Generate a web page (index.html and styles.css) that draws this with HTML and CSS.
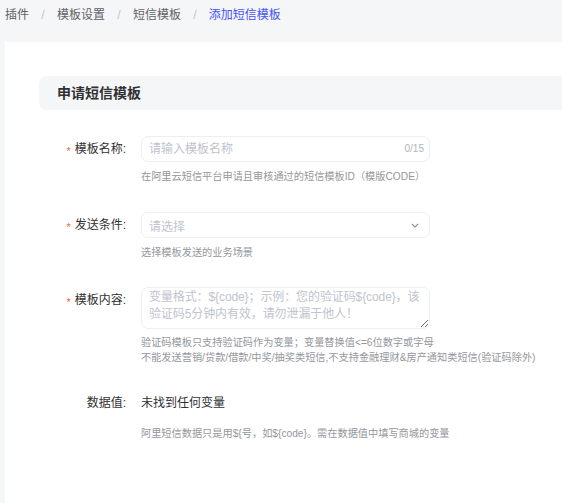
FILE: index.html
```html
<!DOCTYPE html>
<html lang="zh-CN">
<head>
<meta charset="utf-8">
<title>添加短信模板</title>
<link rel="stylesheet" href="styles.css">
</head>
<body>
<div class="page">
  <nav class="crumbs"><span class="crumb">插件</span><span class="sep">/</span><span class="crumb">模板设置</span><span class="sep">/</span><span class="crumb">短信模板</span><span class="sep">/</span><span class="crumb active">添加短信模板</span></nav>
  <main class="card">
    <div class="section-head">申请短信模板</div>
    <form class="form">
      <div class="item item-name">
        <label class="label"><span class="req">*</span>模板名称:</label>
        <div class="content">
          <div class="input-wrap">
            <input class="input" type="text" placeholder="请输入模板名称">
            <span class="count">0/15</span>
          </div>
          <div class="help">在阿里云短信平台申请且审核通过的短信模板ID（模版CODE）</div>
        </div>
      </div>
      <div class="item item-cond">
        <label class="label"><span class="req">*</span>发送条件:</label>
        <div class="content">
          <div class="select">
            <span class="select-ph">请选择</span>
            <svg class="chev" width="8" height="5" viewBox="0 0 8 5"><path d="M0.8 0.8 L4 4 L7.2 0.8" fill="none" stroke="#8a90a4" stroke-width="1.2"/></svg>
          </div>
          <div class="help">选择模板发送的业务场景</div>
        </div>
      </div>
      <div class="item item-body">
        <label class="label"><span class="req">*</span>模板内容:</label>
        <div class="content">
          <textarea class="textarea" placeholder="变量格式：${code}；示例：您的验证码${code}，该&#10;验证码5分钟内有效，请勿泄漏于他人！"></textarea>
          <div class="help help-two">验证码模板只支持验证码作为变量；变量替换值&lt;=6位数字或字母<br>不能发送营销/贷款/借款/中奖/抽奖类短信,不支持金融理财&amp;房产通知类短信(验证码除外)</div>
        </div>
      </div>
      <div class="item item-data">
        <label class="label">数据值:</label>
        <div class="content">
          <div class="value">未找到任何变量</div>
          <div class="help help-data">阿里短信数据只是用${号，如${code}。需在数据值中填写商城的变量</div>
        </div>
      </div>
    </form>
  </main>
</div>
</body>
</html>
```
FILE: styles.css
```css
* { box-sizing: border-box; }
html, body {
  margin: 0;
  padding: 0;
  background: #f5f6f8;
  overflow: hidden;
}
body {
  font-family: "Liberation Sans", "Noto Sans CJK SC", sans-serif;
  color: #303133;
  width: 562px;
  height: 503px;
}
.page {
  width: 562px;
  height: 503px;
  overflow: hidden;
}
.crumbs {
  height: 42px;
  padding: 6px 0 0 5px;
  font-size: 12px;
  line-height: 19px;
  white-space: nowrap;
}
.crumb { color: #606266; }
.crumb.active { color: #4251f5; }
.sep {
  color: #c0c4cc;
  margin: 0 12.3px;
}
.card {
  margin-left: 5px;
  width: 600px;
  height: 470px;
  background: #fff;
  padding: 34px 0 0 34px;
}
.section-head {
  height: 34px;
  background: #f5f6f8;
  border-radius: 8px;
  padding-left: 18px;
  font-size: 14px;
  font-weight: bold;
  line-height: 34px;
  color: #303133;
}
.form {
  margin-left: -34px;
}
.item {
  display: flex;
  align-items: flex-start;
}
.item-name { margin-top: 26px; }
.item-cond { margin-top: 28px; }
.item-body { margin-top: 27px; }
.item-data { margin-top: 25px; }
.label {
  width: 121px;
  flex: none;
  text-align: right;
  font-size: 12px;
  line-height: 26px;
  color: #303133;
}
.req {
  display: inline-block;
  color: #f5683f;
  margin-right: 4px;
  font-size: 11px;
  line-height: 10px;
  position: relative;
  top: 2px;
}
.content {
  margin-left: 15px;
  width: 289px;
  flex: none;
}
.input-wrap {
  position: relative;
  height: 26px;
}
.input {
  display: block;
  width: 289px;
  height: 26px;
  border: 1px solid #eceef2;
  border-radius: 7px;
  padding: 0 36px 0 7px;
  font-family: inherit;
  font-size: 12px;
  color: #303133;
  outline: none;
  background: #fff;
}
.input::placeholder { color: #c0c4cc; }
.count {
  position: absolute;
  right: 6px;
  top: 0;
  line-height: 26px;
  font-size: 10px;
  color: #b1b4ba;
}
.select {
  height: 26px;
  border: 1px solid #eceef2;
  border-radius: 7px;
  padding: 0 10px 0 7px;
  display: flex;
  align-items: center;
  justify-content: space-between;
}
.select-ph {
  font-size: 12px;
  color: #c0c4cc;
}
.chev { display: block; }
.textarea {
  display: block;
  width: 289px;
  height: 42px;
  border: 1px solid #eceef2;
  border-radius: 7px;
  padding: 1px 0 1px 7px;
  font-family: inherit;
  font-size: 12px;
  line-height: 17px;
  color: #303133;
  outline: none;
  resize: vertical;
  overflow: hidden;
}
.textarea::placeholder { color: #c0c4cc; letter-spacing: -0.1px; }
.help {
  margin-top: 7px;
  font-size: 10.2px;
  line-height: 15px;
  color: #94979d;
  white-space: nowrap;
}
.help-two { margin-top: 6px; }
.value {
  font-size: 12px;
  line-height: 26px;
  color: #303133;
}
.help-data { margin-top: 10px; }
```
